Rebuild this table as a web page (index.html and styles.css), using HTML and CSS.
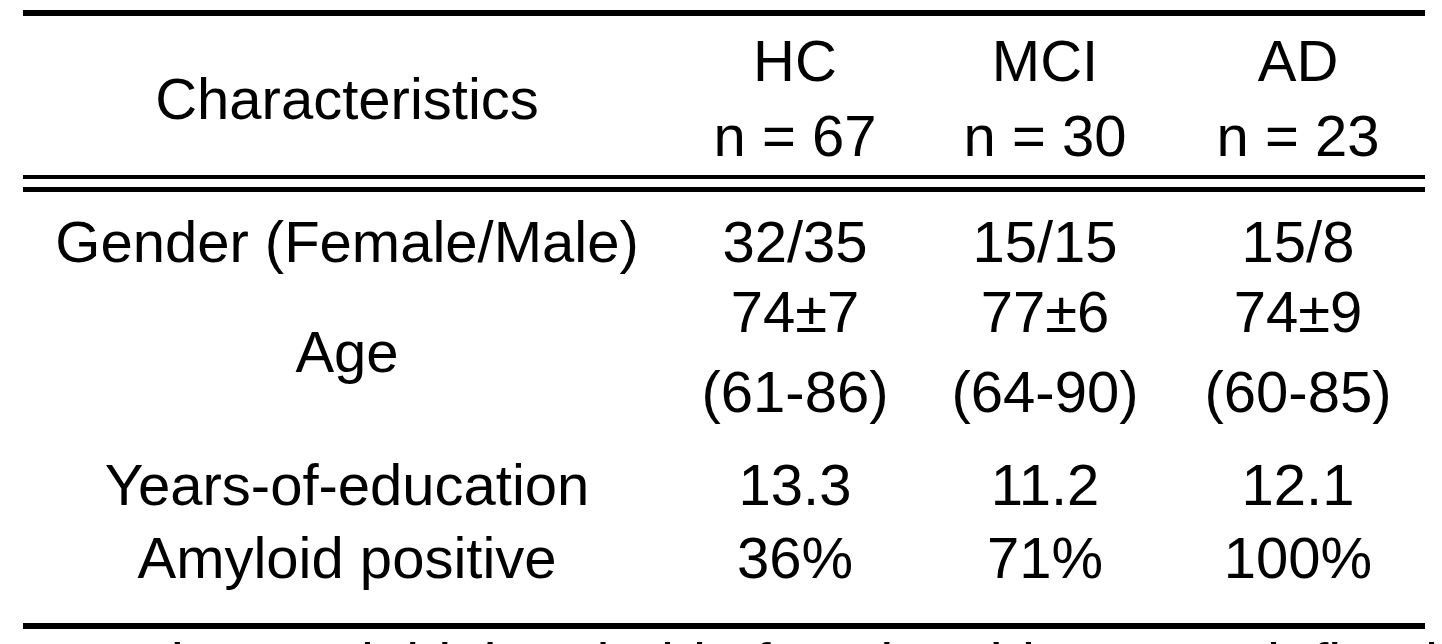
FILE: index.html
```html
<!DOCTYPE html>
<html lang="en">
<head>
<meta charset="utf-8">
<title>Demographics</title>
<link rel="stylesheet" href="styles.css">
</head>
<body>
<div class="page">
  <div class="table">
    <div class="rule rule-thick"></div>
    <div class="row row-head">
      <div class="cell cell-label">Characteristics</div>
      <div class="cell"><span>HC</span><span>n = 67</span></div>
      <div class="cell"><span>MCI</span><span>n = 30</span></div>
      <div class="cell"><span>AD</span><span>n = 23</span></div>
    </div>
    <div class="rule rule-thin"></div>
    <div class="rule-gap"></div>
    <div class="rule rule-thin2"></div>
    <div class="body">
      <div class="row row-gender">
        <div class="cell cell-label">Gender (Female/Male)</div>
        <div class="cell">32/35</div>
        <div class="cell">15/15</div>
        <div class="cell">15/8</div>
      </div>
      <div class="row row-age">
        <div class="cell cell-label">Age</div>
        <div class="cell stack"><span>74±7</span><span>(61-86)</span></div>
        <div class="cell stack"><span>77±6</span><span>(64-90)</span></div>
        <div class="cell stack"><span>74±9</span><span>(60-85)</span></div>
      </div>
      <div class="row row-edu">
        <div class="cell cell-label">Years-of-education</div>
        <div class="cell">13.3</div>
        <div class="cell">11.2</div>
        <div class="cell">12.1</div>
      </div>
      <div class="row row-amy">
        <div class="cell cell-label">Amyloid positive</div>
        <div class="cell">36%</div>
        <div class="cell">71%</div>
        <div class="cell">100%</div>
      </div>
    </div>
    <div class="rule rule-bottom"></div>
  </div>
  <p class="note">Note: the amyloid threshold of each subject was defined at the tracer uptake level</p>
</div>
</body>
</html>
```

FILE: styles.css
```css
html, body {
  margin: 0;
  padding: 0;
  background: #ffffff;
}

body {
  width: 1442px;
  height: 644px;
  overflow: hidden;
  font-family: "Liberation Sans", Arial, Helvetica, sans-serif;
  font-size: 58px;
  color: #000000;
}

.page {
  padding-top: 10px;
}

.table {
  margin-left: 23px;
  width: 1402px;
}

.rule {
  background: #000000;
}

.rule-thick {
  height: 6px;
}

.rule-thin {
  height: 4px;
}

.rule-gap {
  height: 8px;
}

.rule-thin2 {
  height: 5px;
}

.rule-bottom {
  height: 6px;
}

.row {
  display: grid;
  grid-template-columns: 648px 248px 252px 254px;
  line-height: 70px;
}

.cell {
  display: flex;
  flex-direction: column;
  align-items: center;
  justify-content: center;
  text-align: center;
  white-space: nowrap;
}

.row-head {
  line-height: 75px;
  padding-top: 7px;
  padding-bottom: 2px;
}

.body {
  padding-top: 15px;
  padding-bottom: 30px;
}

.stack {
  gap: 10px;
}

.row-edu {
  margin-top: 23px;
}

.row-amy {
  margin-top: 3px;
}

.note {
  margin: 0;
  line-height: 70px;
  white-space: nowrap;
  overflow: hidden;
}
```
